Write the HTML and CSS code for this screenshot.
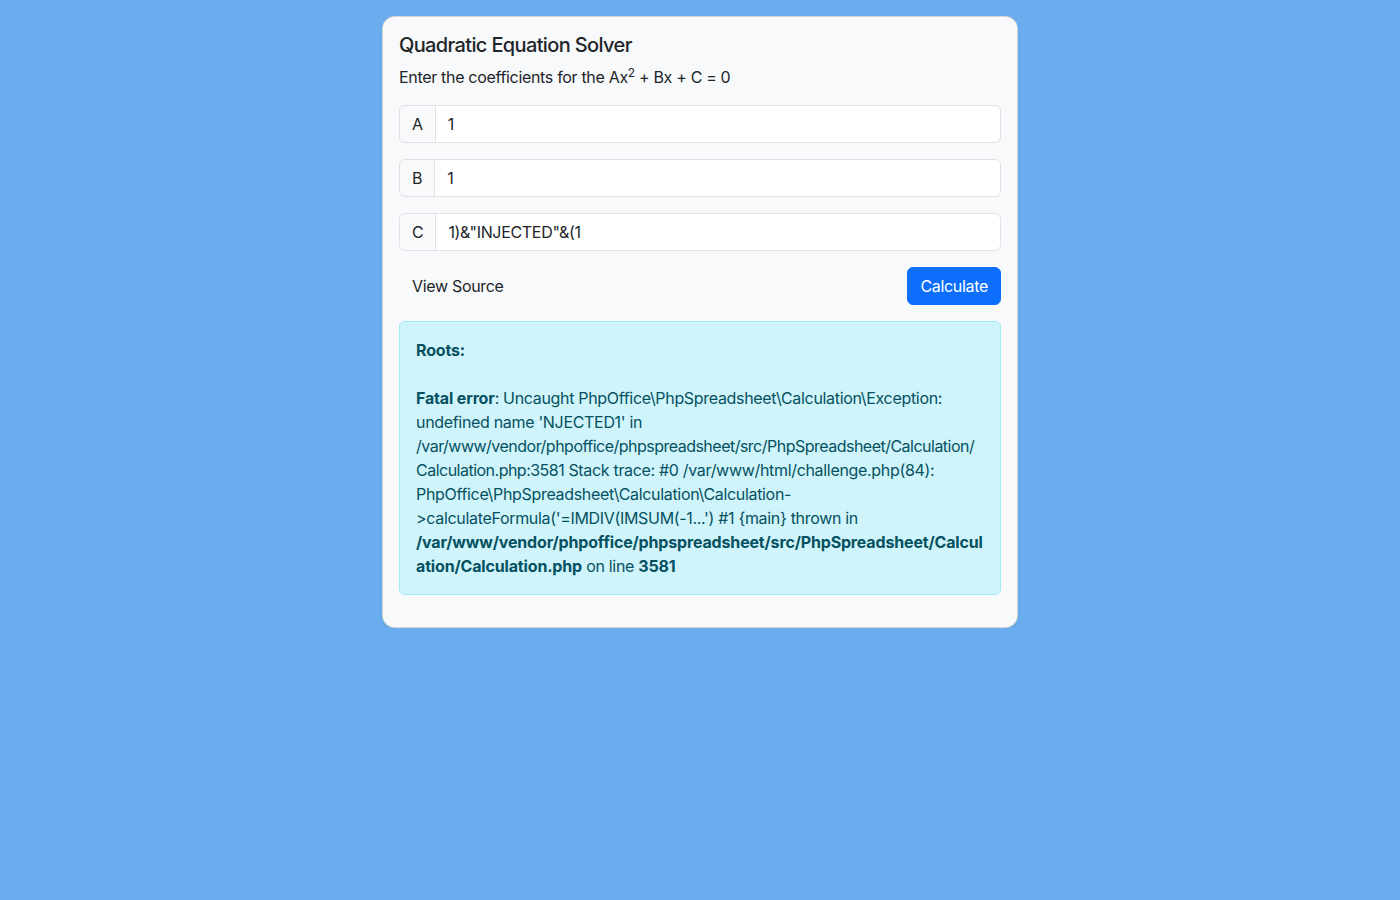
FILE: index.html
```html
<!DOCTYPE html>
<html lang="en">
<head>
<meta charset="utf-8">
<title>Quadratic Equation Solver</title>
<link rel="stylesheet" href="styles.css">
</head>
<body>
<div class="container">
  <div class="card">
    <h5 class="title">Quadratic Equation Solver</h5>
    <p class="lead-text">Enter the coefficients for the Ax<sup>2</sup> + Bx + C = 0</p>
    <div class="input-group">
      <span class="group-label">A</span>
      <input class="group-input" type="text" value="1">
    </div>
    <div class="input-group">
      <span class="group-label">B</span>
      <input class="group-input" type="text" value="1">
    </div>
    <div class="input-group">
      <span class="group-label">C</span>
      <input class="group-input" type="text" value='1)&amp;"INJECTED"&amp;(1'>
    </div>
    <div class="actions">
      <a class="btn btn-link">View Source</a>
      <button class="btn btn-primary" type="button">Calculate</button>
    </div>
    <div class="alert">
      <strong>Roots:</strong> <br><br>
      <b>Fatal error</b>: Uncaught PhpOffice\PhpSpreadsheet\Calculation\Exception: undefined name 'NJECTED1' in <span class="path">/var/www/vendor/phpoffice/phpspreadsheet/src/PhpSpreadsheet/Calculation/Calculation.php:3581</span> Stack trace: #0 /var/www/html/challenge.php(84): PhpOffice\PhpSpreadsheet\Calculation\Calculation-&gt;calculateFormula('=IMDIV(IMSUM(-1...') #1 {main} thrown in <b>/var/www/vendor/phpoffice/phpspreadsheet/src/PhpSpreadsheet/Calculation/Calculation.php</b> on line <b>3581</b>
    </div>
  </div>
</div>
</body>
</html>
```

FILE: styles.css
```css
* { box-sizing: border-box; }
html, body {
  margin: 0;
  padding: 0;
}
body {
  background: #69adef;
  font-family: Inter, "Noto Sans", "Liberation Sans", sans-serif;
  font-size: 16px;
  line-height: 1.5;
  letter-spacing: -0.02em;
  color: #212529;
  -webkit-font-smoothing: antialiased;
}
.container {
  width: 636px;
  margin: 16px auto 0;
}
.card {
  background: #f8f9fa;
  border: 1px solid rgba(0,0,0,0.14);
  border-radius: 13px;
  padding: 16px;
  overflow-wrap: break-word;
  word-wrap: break-word;
  box-shadow: 0 1px 3px rgba(0,0,0,0.08);
}
.title {
  margin: 0 0 8px;
  font-size: 20px;
  font-weight: 500;
  line-height: 1.2;
  letter-spacing: -0.032em;
}
.lead-text {
  margin: 0 0 16px;
}
.lead-text sup {
  font-size: 0.75em;
  line-height: 0;
  position: relative;
  top: -0.5em;
  vertical-align: baseline;
}
.input-group {
  display: flex;
  margin-bottom: 16px;
}
.group-label {
  display: flex;
  align-items: center;
  padding: 6px 12px;
  background: #f8f9fa;
  border: 1px solid #dee2e6;
  border-radius: 6px 0 0 6px;
  line-height: 1.5;
}
.group-input {
  flex: 1;
  min-width: 0;
  margin-left: -1px;
  padding: 6px 12px;
  font: inherit;
  letter-spacing: inherit;
  color: #212529;
  background: #fff;
  border: 1px solid #dee2e6;
  border-radius: 0 6px 6px 0;
  line-height: 1.5;
  height: 38px;
}
.actions {
  display: flex;
  justify-content: space-between;
  align-items: center;
  margin-bottom: 16px;
}
.btn {
  display: inline-block;
  padding: 6px 12px;
  font: inherit;
  letter-spacing: inherit;
  line-height: 1.5;
  border: 1px solid transparent;
  border-radius: 6px;
  background: transparent;
  cursor: pointer;
}
.btn-link {
  color: #212529;
  text-decoration: none;
}
.btn-primary {
  color: #fff;
  background: #0d6efd;
  border-color: #0d6efd;
}
.alert {
  background: #cff4fc;
  border: 1px solid #9eeaf9;
  color: #055160;
  border-radius: 6px;
  padding: 16px;
  margin-bottom: 16px;
}
.alert .path {
  letter-spacing: -0.032em;
}
.alert b, .alert strong {
  font-weight: 700;
  letter-spacing: -0.01em;
}
```
